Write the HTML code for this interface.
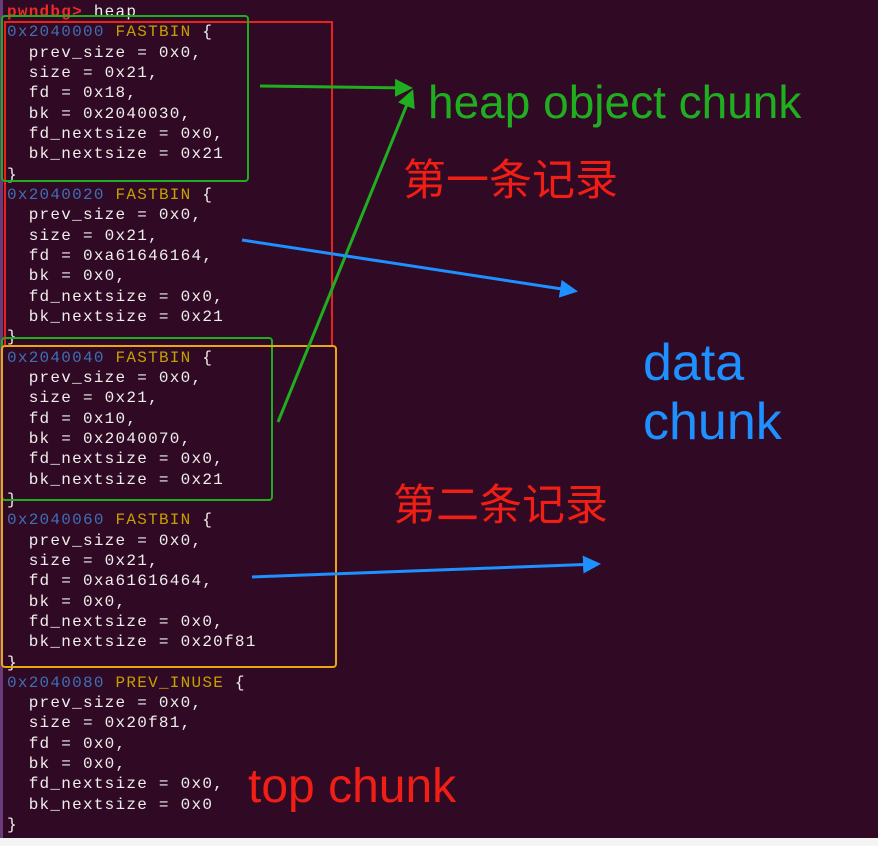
<!DOCTYPE html>
<html><head><meta charset="utf-8"><style>
body{margin:0;width:878px;height:846px;background:#f4f4f4;overflow:hidden;position:relative}
#term{position:absolute;left:0;top:0;width:878px;height:838px;background:#300a24;border-left:3px solid #6a3a7a;box-sizing:border-box}
pre{position:absolute;left:7px;top:2px;margin:0;font-family:"Liberation Mono",monospace;font-size:16px;letter-spacing:1.25px;line-height:20.33px;color:#eeeeec}
.a{color:#3f6fb5}.y{color:#c4a000}.p{color:#ef2929;font-weight:bold}
.lbl{position:absolute;font-family:"Liberation Sans","Noto Sans CJK SC",sans-serif;white-space:nowrap}
svg{position:absolute;left:0;top:0}
</style></head><body>
<div id="term"></div>
<pre><span class="p">pwndbg&gt;</span> heap
<span class="a">0x2040000</span> <span class="y">FASTBIN</span> {
  prev_size = 0x0,
  size = 0x21,
  fd = 0x18,
  bk = 0x2040030,
  fd_nextsize = 0x0,
  bk_nextsize = 0x21
}
<span class="a">0x2040020</span> <span class="y">FASTBIN</span> {
  prev_size = 0x0,
  size = 0x21,
  fd = 0xa61646164,
  bk = 0x0,
  fd_nextsize = 0x0,
  bk_nextsize = 0x21
}
<span class="a">0x2040040</span> <span class="y">FASTBIN</span> {
  prev_size = 0x0,
  size = 0x21,
  fd = 0x10,
  bk = 0x2040070,
  fd_nextsize = 0x0,
  bk_nextsize = 0x21
}
<span class="a">0x2040060</span> <span class="y">FASTBIN</span> {
  prev_size = 0x0,
  size = 0x21,
  fd = 0xa61616464,
  bk = 0x0,
  fd_nextsize = 0x0,
  bk_nextsize = 0x20f81
}
<span class="a">0x2040080</span> <span class="y">PREV_INUSE</span> {
  prev_size = 0x0,
  size = 0x20f81,
  fd = 0x0,
  bk = 0x0,
  fd_nextsize = 0x0,
  bk_nextsize = 0x0
}</pre>
<svg width="878" height="846">
<defs>
<marker id="g" markerWidth="6" markerHeight="6" refX="5" refY="3" orient="auto"><path d="M0,0 L6,3 L0,6 z" fill="#1fae1f"/></marker>
<marker id="b" markerWidth="6" markerHeight="6" refX="5" refY="3" orient="auto"><path d="M0,0 L6,3 L0,6 z" fill="#1e90ff"/></marker>
</defs>
<rect x="5" y="22" width="327" height="324" fill="none" stroke="#e8231d" stroke-width="2"/>
<rect x="2" y="16" width="246" height="165" rx="3" fill="none" stroke="#1fae1f" stroke-width="2"/>
<rect x="2" y="338" width="270" height="162" rx="3" fill="none" stroke="#1fae1f" stroke-width="2"/>
<rect x="2" y="346" width="334" height="321" rx="3" fill="none" stroke="#e8a810" stroke-width="2"/>
<line x1="260" y1="86" x2="410" y2="88" stroke="#1fae1f" stroke-width="3" marker-end="url(#g)"/>
<line x1="278" y1="422" x2="412" y2="92" stroke="#1fae1f" stroke-width="3" marker-end="url(#g)"/>
<line x1="242" y1="240" x2="575" y2="291" stroke="#1e90ff" stroke-width="3" marker-end="url(#b)"/>
<line x1="252" y1="577" x2="598" y2="564" stroke="#1e90ff" stroke-width="3" marker-end="url(#b)"/>
</svg>
<div class="lbl" style="left:428px;top:75px;font-size:46px;color:#1fae1f">heap object chunk</div>
<div class="lbl" style="left:403px;top:146px;font-size:43px;color:#f01e14">第一条记录</div>
<div class="lbl" style="left:643px;top:334px;font-size:52px;line-height:59px;color:#1e90ff">data<br>chunk</div>
<div class="lbl" style="left:393px;top:471px;font-size:43px;color:#f01e14">第二条记录</div>
<div class="lbl" style="left:248px;top:759px;font-size:48px;color:#f01e14">top chunk</div>
</body></html>
